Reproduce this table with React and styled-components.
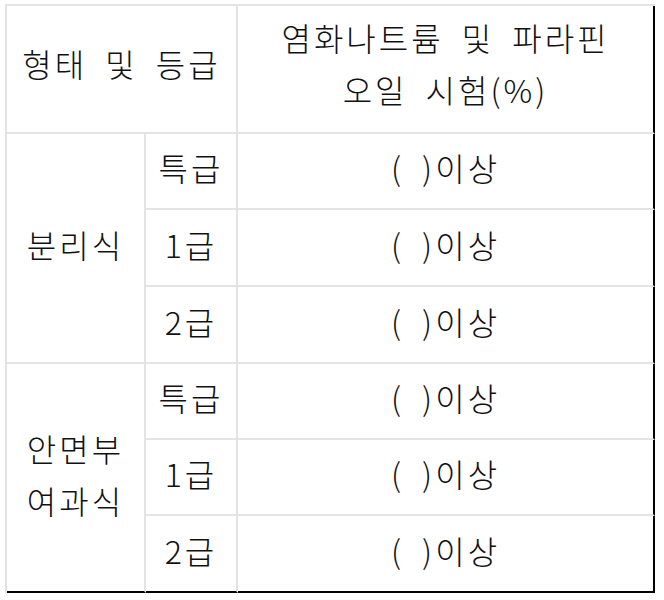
import React from 'react';
import styled, {createGlobalStyle} from 'styled-components';

const GlobalStyle = createGlobalStyle`
    body {
        margin: 0;
        background: #ffffff;
        font-family: "Noto Sans CJK KR", "Noto Sans", sans-serif;
    }
`

const Table = styled.table`
    margin: 4px 0 0 5px;
    width: 650px;
    table-layout: fixed;
    border-collapse: separate;
    border-spacing: 0;
    border-top: 2px solid #e3e3e3;
    border-left: 2px solid #e3e3e3;
    color: #111;
    font-size: 32px;
    font-weight: 300;
    letter-spacing: 3px;
    word-spacing: 8px;
`

const Row = styled.tr`
    height: ${props => props.h}px;
`

const Cell = styled.td`
    box-sizing: border-box;
    padding: 0 0 ${props => props.head ? 12 : 8}px;
    text-align: center;
    vertical-align: middle;
    line-height: 52px;
    border-right: 2px solid ${props => props.edge ? '#000' : '#e3e3e3'};
    border-bottom: 2px solid ${props => props.last ? '#000' : '#e3e3e3'};
`

const groups = [
    {name: ['분리식'], grades: ['특급', '1급', '2급'], heights: [76, 77, 77]},
    {name: ['안면부', '여과식'], grades: ['특급', '1급', '2급'], heights: [76, 76, 77]}
]

function App() {
    return (
        <>
            <GlobalStyle />
            <Table>
                <colgroup>
                    <col style={{width: 139}} />
                    <col style={{width: 92}} />
                    <col style={{width: 417}} />
                </colgroup>
                <tbody>
                    <Row h={128}>
                        <Cell head colSpan={2}>형태 및 등급</Cell>
                        <Cell head edge>염화나트륨 및 파라핀<br />오일 시험(%)</Cell>
                    </Row>
                    {groups.map((g, gi) =>
                        g.grades.map((grade, i) => {
                            const last = gi === groups.length - 1 && i === g.grades.length - 1;
                            return (
                                <Row h={g.heights[i]} key={gi + '-' + i}>
                                    {i === 0 &&
                                        <Cell rowSpan={3} last={gi === groups.length - 1}>
                                            {g.name.map((n, k) => <div key={k}>{n}</div>)}
                                        </Cell>}
                                    <Cell last={last}>{grade}</Cell>
                                    <Cell edge last={last}>( )이상</Cell>
                                </Row>
                            );
                        })
                    )}
                </tbody>
            </Table>
        </>
    );
}

export default App;
